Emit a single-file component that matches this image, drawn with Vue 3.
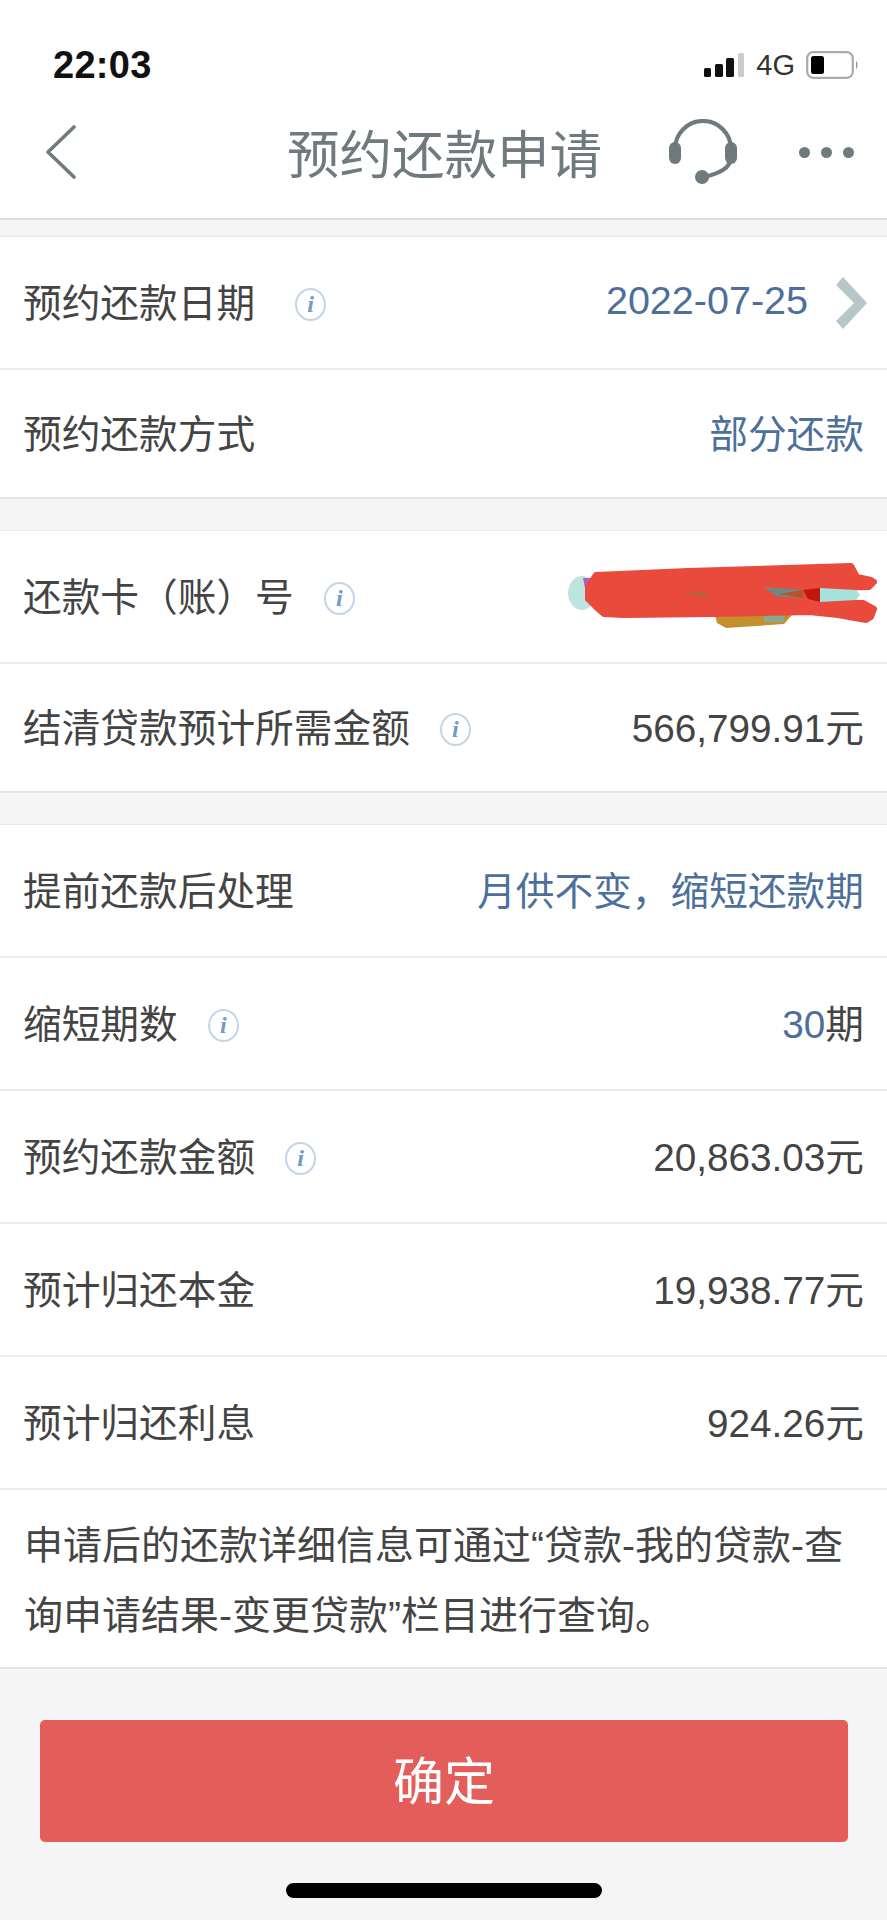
<script setup>
const sectionA = [
  { label: '预约还款日期', info: 'wide', value: '2022-07-25', tone: 'link date', chevron: true },
  { label: '预约还款方式', value: '部分还款', tone: 'link' }
]
const sectionC = [
  { label: '提前还款后处理', value: '月供不变，缩短还款期', tone: 'link' },
  { label: '缩短期数', info: 'near', value: '30', unit: '期', tone: 'link' },
  { label: '预约还款金额', info: 'near', value: '20,863.03元' },
  { label: '预计归还本金', value: '19,938.77元' },
  { label: '预计归还利息', value: '924.26元' }
]
</script>

<template>
  <div class="page">
    <div class="top">
      <div class="status">
        <span class="time">22:03</span>
        <div class="status-right">
          <svg class="signal" width="41" height="24" viewBox="0 0 41 24">
            <rect x="0" y="15" width="7" height="9" rx="1.5" fill="#111" />
            <rect x="11" y="11" width="8" height="13" rx="1.5" fill="#111" />
            <rect x="22" y="5" width="8" height="19" rx="1.5" fill="#111" />
            <rect x="34" y="0" width="6" height="24" rx="1.5" fill="#ccc" />
          </svg>
          <span class="net">4G</span>
          <svg class="battery" width="54" height="28" viewBox="0 0 54 28">
            <rect x="1.2" y="1.2" width="45.6" height="25.6" rx="6" fill="none" stroke="#aaa" stroke-width="2.2" />
            <rect x="5" y="5" width="13" height="18" rx="2.5" fill="#000" />
            <path d="M50 10c2 1 2 7 0 8z" fill="#999" />
          </svg>
        </div>
      </div>
      <div class="nav">
        <svg class="back" width="32" height="56" viewBox="0 0 32 56">
          <path d="M28 3 2 28l26 25" fill="none" stroke="#6f7a7e" stroke-width="3.6" stroke-linecap="round" stroke-linejoin="round" />
        </svg>
        <h1 class="title">预约还款申请</h1>
        <svg class="headset" width="70" height="66" viewBox="0 0 70 66">
          <path d="M7 30A28 28 0 0 1 63 30v8C63 50 50 54 37 58" fill="none" stroke="#6f7a7e" stroke-width="4.2" stroke-linecap="round" />
          <rect x="1" y="23" width="12" height="22" rx="6" fill="#6f7a7e" />
          <rect x="57" y="23" width="12" height="22" rx="6" fill="#6f7a7e" />
          <circle cx="34" cy="58" r="7" fill="#6f7a7e" />
        </svg>
        <div class="dots"><i></i><i></i><i></i></div>
      </div>
    </div>

    <section class="group first">
      <div v-for="r in sectionA" :key="r.label" class="row">
        <span class="label">{{ r.label }}</span>
        <span v-if="r.info" class="info" :class="r.info"><em>i</em></span>
        <span class="value" :class="r.tone">{{ r.value }}</span>
        <svg v-if="r.chevron" class="chev" width="31" height="52" viewBox="0 0 31 52">
          <path d="M7 0 31 26 7 52 0 44 18 26 0 8z" fill="#b7c6c9" />
        </svg>
      </div>
    </section>

    <section class="group">
      <div class="row">
        <span class="label">还款卡（账）号</span>
        <span class="info near"><em>i</em></span>
        <svg class="scribble" width="309" height="66" viewBox="0 0 309 66">
          <ellipse cx="14" cy="30" rx="14" ry="17" fill="#bfe3df" />
          <path d="M15 15h11v10H17z" fill="#b05ad0" />
          <path d="M147 52h77l-8 9-58 4-9-5z" fill="#c4902c" />
          <path d="M196 52h20v7h-20z" fill="#8aa890" />
          <path d="M28 12 120 8 218 5 283 3 289 14 303 17 306 19 301 24 252 25 252 39 295 40 306 46 303 54 298 57 270 52 241 49 145 51 56 52 36 51 29 45 20 36 20 24z" fill="#e94a3c" stroke="#e94a3c" stroke-width="6" stroke-linejoin="round" />
          <path d="M196 24 235 27 235 35 208 33z" fill="#6e8a80" />
          <path d="M212 31 235 27 235 35z" fill="#b6532c" />
          <path d="M235 27 252 25 252 39 240 36z" fill="#c1180c" />
          <path d="M252 25 288 27 292 32 288 37 252 39z" fill="#a6e2dc" />
          <path d="M118 30h18M130 32h10" stroke="#9a7040" stroke-width="1.6" />
        </svg>
      </div>
      <div class="row">
        <span class="label">结清贷款预计所需金额</span>
        <span class="info near"><em>i</em></span>
        <span class="value">566,799.91元</span>
      </div>
    </section>

    <section class="group">
      <div v-for="r in sectionC" :key="r.label" class="row">
        <span class="label">{{ r.label }}</span>
        <span v-if="r.info" class="info" :class="r.info"><em>i</em></span>
        <span class="value">
          <span :class="r.tone">{{ r.value }}</span>{{ r.unit }}
        </span>
      </div>
      <p class="note">申请后的还款详细信息可通过“贷款-我的贷款-查询申请结果-变更贷款”栏目进行查询。</p>
    </section>

    <div class="foot">
      <button class="confirm" type="button">确定</button>
      <div class="home"></div>
    </div>
  </div>
</template>

<style>
html, body { margin: 0; background: #f5f5f5; }
</style>

<style scoped>
.page {
  width: 887px;
  height: 1920px;
  overflow: hidden;
  background: #f5f5f5;
  font-family: "Liberation Sans", "Noto Sans CJK SC", sans-serif;
  color: #444;
}
.top { background: #fff; height: 220px; box-sizing: border-box; border-bottom: 2px solid #dcdcdc; }
.status { height: 102px; padding: 28px 27px 0 53px; box-sizing: border-box; display: flex; align-items: center; justify-content: space-between; }
.time { font-size: 38px; font-weight: 700; color: #111; letter-spacing: 0.3px; }
.status-right { display: flex; align-items: center; }
.net { font-size: 29px; color: #333; margin: 0 11px; }
.nav { height: 100px; display: flex; align-items: center; padding: 0 33px 0 46px; }
.title { margin: 8px 0 0 209px; font-size: 52.5px; font-weight: 400; color: #6f7a7e; line-height: 1; white-space: nowrap; }
.headset { margin-left: auto; }
.dots { display: flex; gap: 11px; margin-left: 61px; }
.dots i { width: 11px; height: 11px; border-radius: 50%; background: #6f7a7e; }

.group { background: #fff; margin-top: 31px; border-top: 1px solid #e8e8e8; border-bottom: 2px solid #e4e4e4; }
.group.first { margin-top: 16px; }
.row {
  height: 133px;
  box-sizing: border-box;
  padding: 0 23px 5px;
  display: flex;
  align-items: center;
  border-bottom: 2px solid #ececec;
  font-size: 38.7px;
}
.group > .row:last-child { border-bottom: 0; height: 127px; }
.label { color: #444; white-space: nowrap; }
.value { margin-left: auto; color: #444; white-space: nowrap; }
.link { color: #4c6f9c; }
.date { font-size: 39.5px; }
.info {
  width: 27px;
  height: 29px;
  border: 2px solid #c4d6e6;
  border-radius: 50%;
  display: inline-flex;
  align-items: center;
  justify-content: center;
  margin-top: 8px;
}
.info em { font: italic 700 24px "Liberation Serif", serif; color: #6e9bc8; }
.info.wide { margin-left: 40px; }
.info.near { margin-left: 30px; }
.chev { margin-left: 28px; margin-right: -3px; margin-top: 5px; }
.scribble { margin-left: auto; margin-right: -13px; margin-top: 4px; }
.note { margin: 0; padding: 21px 23px 16px 24px; font-size: 39px; line-height: 70px; color: #444; }

.foot { padding: 0 39px 0 40px; }
.confirm {
  display: block;
  width: 808px;
  height: 122px;
  margin-top: 51px;
  padding: 0 0 6px;
  border: 0;
  border-radius: 5px;
  background: #e35d5b;
  color: #fff;
  font: inherit;
  font-size: 51px;
}
.home { width: 316px; height: 15px; border-radius: 8px; background: #000; margin: 41px auto 0; }
</style>
